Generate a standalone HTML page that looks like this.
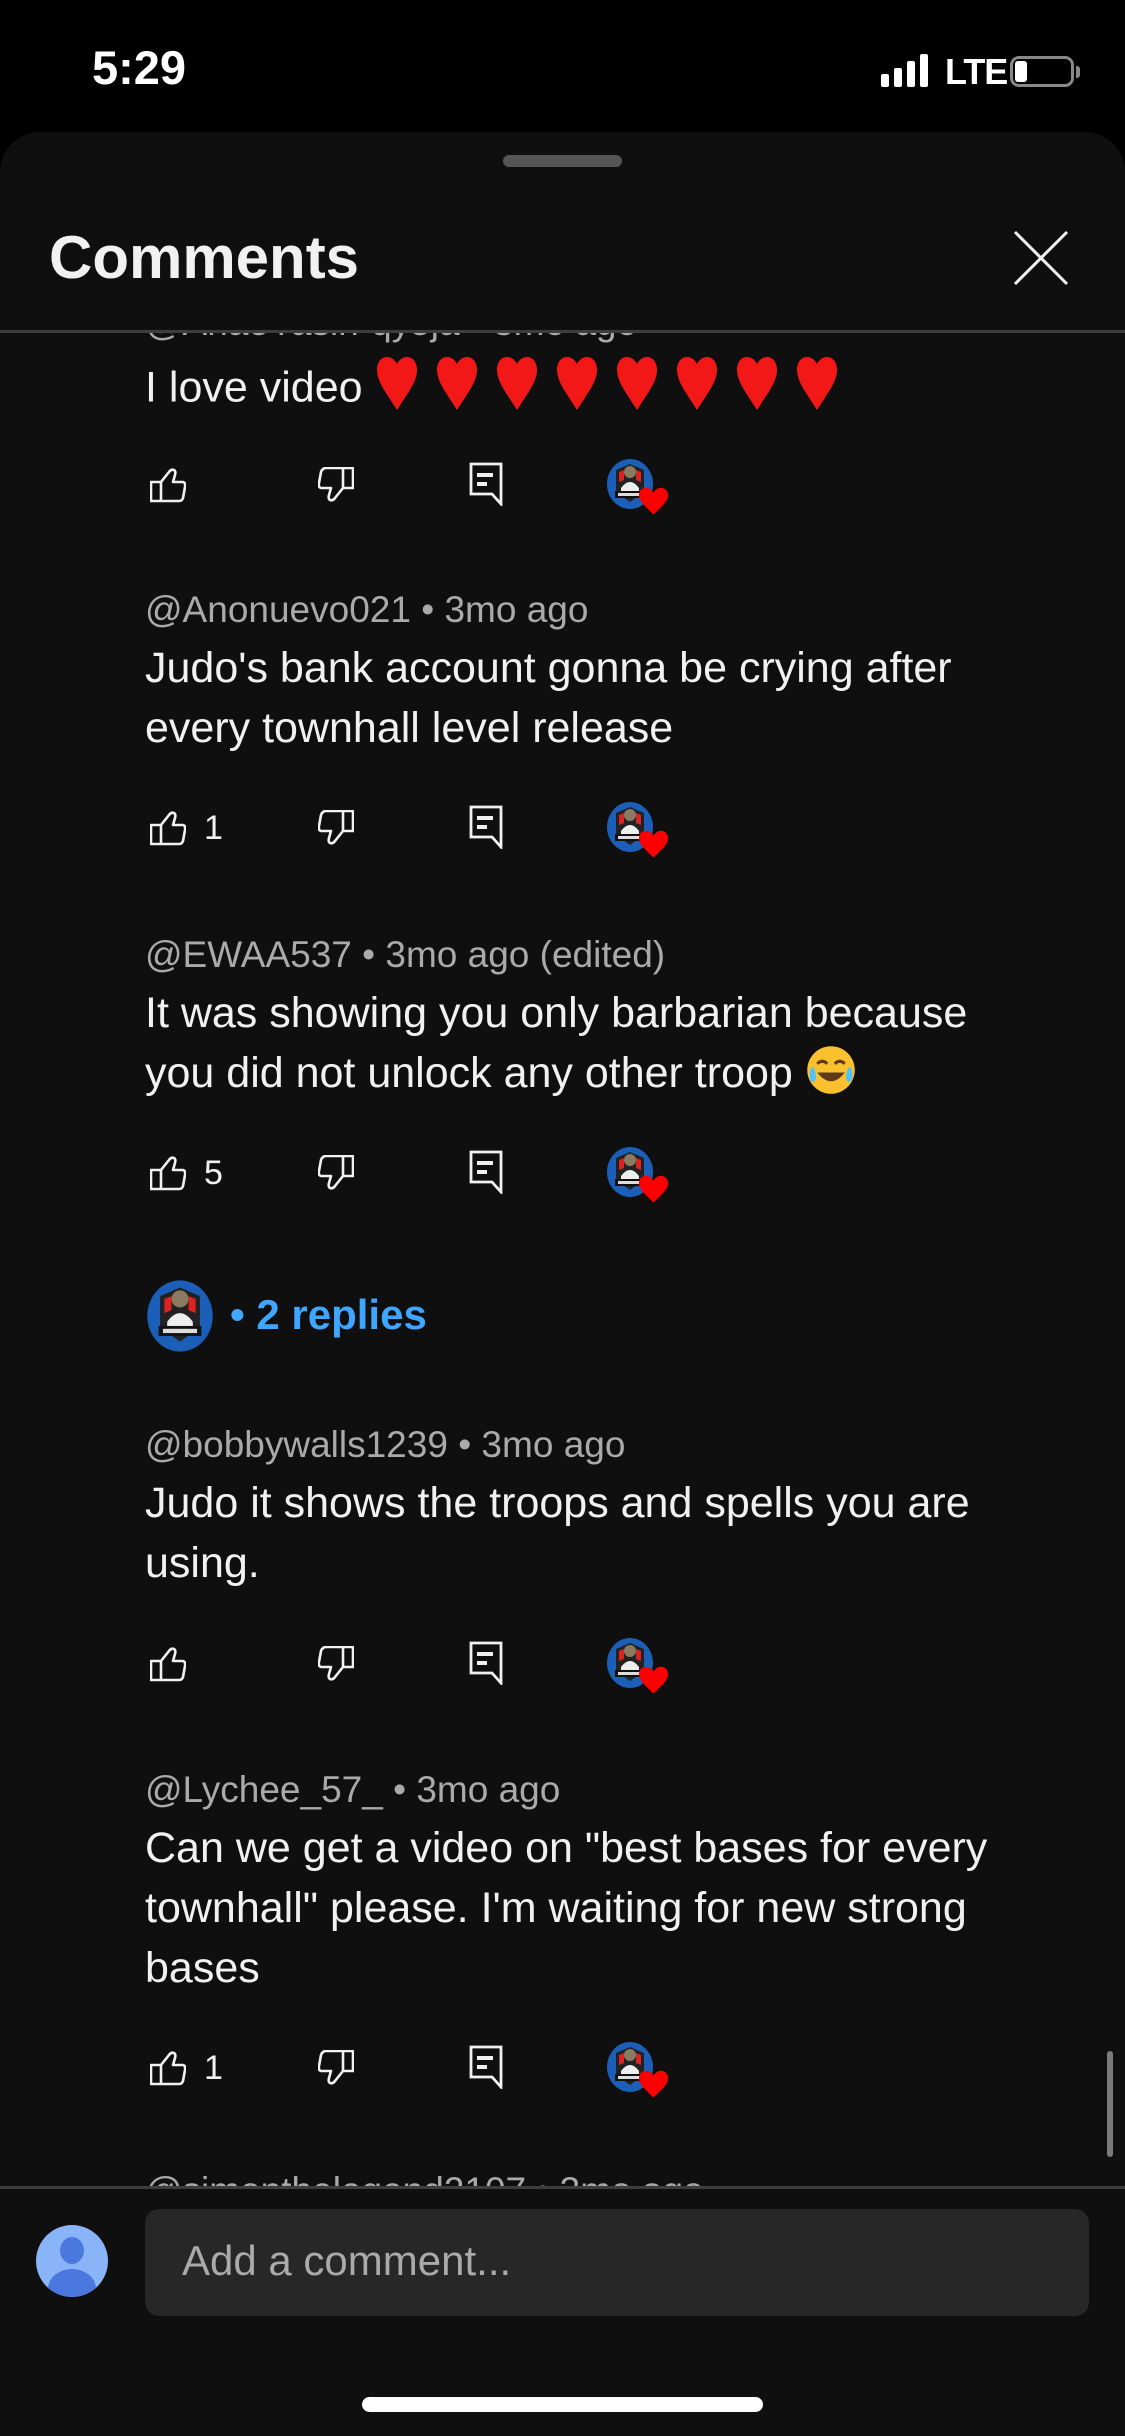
<!DOCTYPE html>
<html><head><meta charset="utf-8"><style>
*{margin:0;padding:0;box-sizing:border-box}
body{width:1125px;height:2436px;background:#000;position:relative;overflow:hidden;font-family:"Liberation Sans",sans-serif;color:#f1f1f1}
.abs{position:absolute}
.sheet{left:0;top:132px;width:1125px;height:2304px;background:#0f0f0f;border-radius:40px 40px 0 0}
.meta{position:absolute;left:145px;font-size:37px;color:#aaa;white-space:nowrap;line-height:42px}
.body{position:absolute;left:145px;font-size:43px;line-height:60px;color:#f1f1f1;white-space:nowrap}
.act{position:absolute;left:0;width:700px;height:60px}
.cnt{position:absolute;font-size:34px;color:#f1f1f1;top:12px}
</style></head><body>
<svg width="0" height="0" style="position:absolute">
<defs>
<symbol id="like" viewBox="0 0 36 36"><path d="M1 15h10v19H1z M11 15 L19 5 Q21 2 24 3 Q26 4 25 8 L23 15 H33 Q36 16 35 20 L33 31 Q32 34 29 34 H11" fill="none" stroke="#f1f1f1" stroke-width="2.6" stroke-linejoin="round"/></symbol>
<symbol id="dis" viewBox="0 0 36 36"><path d="M25 1h10v20H25z M25 21 L17 31 Q15 34 12 33 Q10 32 11 28 L13 21 H3 Q0 20 1 16 L3 5 Q4 2 7 1 H25" fill="none" stroke="#f1f1f1" stroke-width="2.6" stroke-linejoin="round"/></symbol>
<symbol id="rep" viewBox="0 0 34 44"><path d="M2 2H32V42L23 32H2Z" fill="none" stroke="#f1f1f1" stroke-width="2.8"/><rect x="8" y="11" width="16" height="4" fill="#f1f1f1"/><rect x="8" y="20" width="10" height="4" fill="#f1f1f1"/></symbol>
<symbol id="heart" viewBox="0 0 20 20"><path d="M10 19 C4 13 0 10 0 5.5 C0 2.5 2.2 0.5 5 0.5 C7.2 0.5 9 2 10 4 C11 2 12.8 0.5 15 0.5 C17.8 0.5 20 2.5 20 5.5 C20 10 16 13 10 19Z" fill="#ff0000"/></symbol>
<symbol id="heart2" viewBox="0 0 20 28"><path d="M10 27 C5 19 0 13 0 7 C0 3 2.2 0.5 5 0.5 C7.2 0.5 9 2 10 4 C11 2 12.8 0.5 15 0.5 C17.8 0.5 20 3 20 7 C20 13 15 19 10 27Z" fill="#f21818"/></symbol>
<symbol id="ava" viewBox="0 0 48 52"><ellipse cx="24" cy="26" rx="23" ry="25" fill="#1c5fb8"/><path d="M10 12 L24 6 L38 12 L38 34 L24 44 L10 34Z" fill="#222"/><path d="M13 14 L18 12 L18 22 L13 24Z M35 14 L30 12 L30 22 L35 24Z" fill="#d22"/><circle cx="24" cy="14" r="6" fill="#8a7a60"/><path d="M15 30 Q24 18 33 30 L33 34 L15 34Z" fill="#eee"/><rect x="9" y="33" width="30" height="7" fill="#111"/><rect x="12" y="35" width="24" height="3" fill="#ddd"/></symbol>
<symbol id="emo" viewBox="0 0 40 40"><circle cx="20" cy="20" r="19" fill="#fbc02d"/><path d="M9 15 Q13 11 17 15 M23 15 Q27 11 31 15" stroke="#5d3a1a" stroke-width="2.5" fill="none"/><path d="M9 22 Q20 36 31 22Z" fill="#5d3a1a"/><path d="M4 18 Q1 28 6 30 Q10 26 6 18Z M36 18 Q39 28 34 30 Q30 26 34 18Z" fill="#4fc3f7"/></symbol>
</defs></svg>

<div class="abs" style="left:92px;top:40px;font-size:47px;font-weight:bold;color:#fff">5:29</div>
<div class="abs" style="left:881px;top:74px;width:8px;height:13px;background:#fff;border-radius:2px"></div>
<div class="abs" style="left:894px;top:68px;width:8px;height:19px;background:#fff;border-radius:2px"></div>
<div class="abs" style="left:907px;top:61px;width:8px;height:26px;background:#fff;border-radius:2px"></div>
<div class="abs" style="left:920px;top:54px;width:8px;height:33px;background:#fff;border-radius:2px"></div>
<div class="abs" style="left:945px;top:51px;font-size:36px;font-weight:bold;color:#fff;letter-spacing:-1px">LTE</div>
<div class="abs" style="left:1010px;top:56px;width:64px;height:31px;border:3px solid #888;border-radius:9px"></div>
<div class="abs" style="left:1015px;top:61px;width:12px;height:21px;background:#fff;border-radius:3px"></div>
<div class="abs" style="left:1076px;top:66px;width:4px;height:12px;background:#888;border-radius:0 3px 3px 0"></div>

<div class="abs sheet"></div>
<div class="abs" style="left:503px;top:155px;width:119px;height:12px;background:#555;border-radius:6px"></div>
<div class="abs" style="left:49px;top:223px;font-size:60px;font-weight:bold;color:#f1f1f1">Comments</div>
<svg class="abs" style="left:1012px;top:230px" width="58" height="56"><path d="M3 2L55 54M55 2L3 54" stroke="#f1f1f1" stroke-width="3"/></svg>

<div class="abs" style="left:0;top:333px;width:1125px;height:1855px;overflow:hidden">
<div style="position:relative;top:-333px;height:2200px">
<div class="meta" style="top:302px">@AnaeYasin-qy5ja • 3mo ago</div>
<div class="body" style="top:352px">I love video
<span style="display:inline-block;vertical-align:middle">
<svg width="480" height="60" viewBox="0 0 480 60"><use href="#heart2" x="0" y="4" width="46" height="56"/><use href="#heart2" x="60" y="4" width="46" height="56"/><use href="#heart2" x="120" y="4" width="46" height="56"/><use href="#heart2" x="180" y="4" width="46" height="56"/><use href="#heart2" x="240" y="4" width="46" height="56"/><use href="#heart2" x="300" y="4" width="46" height="56"/><use href="#heart2" x="360" y="4" width="46" height="56"/><use href="#heart2" x="420" y="4" width="46" height="56"/></svg></span></div>

<div class="meta" style="top:589px">@Anonuevo021 • 3mo ago</div>
<div class="body" style="top:638px">Judo's bank account gonna be crying after<br>every townhall level release</div>

<div class="meta" style="top:934px">@EWAA537 • 3mo ago (edited)</div>
<div class="body" style="top:983px">It was showing you only barbarian because<br>you did not unlock any other troop <svg width="52" height="50" viewBox="0 0 40 40" style="vertical-align:-8px"><use href="#emo"/></svg></div>

<svg class="abs" style="left:144px;top:1279px" width="72" height="74" viewBox="0 0 48 52"><use href="#ava"/></svg>
<div class="abs" style="left:230px;top:1291px;font-size:42px;color:#3ea6ff;font-weight:bold">• 2 replies</div>

<div class="meta" style="top:1424px">@bobbywalls1239 • 3mo ago</div>
<div class="body" style="top:1473px">Judo it shows the troops and spells you are<br>using.</div>

<div class="meta" style="top:1769px">@Lychee_57_ • 3mo ago</div>
<div class="body" style="top:1818px">Can we get a video on "best bases for every<br>townhall" please. I'm waiting for new strong<br>bases</div>

<div class="meta" style="top:2170px">@simonthelegend2107 • 3mo ago</div>
</div></div>

<div class="act" style="top:454px">
<svg class="abs" style="left:150px;top:13px" width="36" height="36"><use href="#like"/></svg>
<svg class="abs" style="left:318px;top:13px" width="36" height="36"><use href="#dis"/></svg>
<svg class="abs" style="left:469px;top:8px" width="34" height="44"><use href="#rep"/></svg>
<svg class="abs" style="left:606px;top:4px" width="48" height="52"><use href="#ava"/></svg>
<svg class="abs" style="left:639px;top:33px" width="29" height="29"><use href="#heart"/></svg>
</div>
<div class="act" style="top:797px">
<svg class="abs" style="left:150px;top:13px" width="36" height="36"><use href="#like"/></svg><div class="cnt" style="left:204px">1</div>
<svg class="abs" style="left:318px;top:13px" width="36" height="36"><use href="#dis"/></svg>
<svg class="abs" style="left:469px;top:8px" width="34" height="44"><use href="#rep"/></svg>
<svg class="abs" style="left:606px;top:4px" width="48" height="52"><use href="#ava"/></svg>
<svg class="abs" style="left:639px;top:33px" width="29" height="29"><use href="#heart"/></svg>
</div>
<div class="act" style="top:1142px">
<svg class="abs" style="left:150px;top:13px" width="36" height="36"><use href="#like"/></svg><div class="cnt" style="left:204px">5</div>
<svg class="abs" style="left:318px;top:13px" width="36" height="36"><use href="#dis"/></svg>
<svg class="abs" style="left:469px;top:8px" width="34" height="44"><use href="#rep"/></svg>
<svg class="abs" style="left:606px;top:4px" width="48" height="52"><use href="#ava"/></svg>
<svg class="abs" style="left:639px;top:33px" width="29" height="29"><use href="#heart"/></svg>
</div>
<div class="act" style="top:1633px">
<svg class="abs" style="left:150px;top:13px" width="36" height="36"><use href="#like"/></svg>
<svg class="abs" style="left:318px;top:13px" width="36" height="36"><use href="#dis"/></svg>
<svg class="abs" style="left:469px;top:8px" width="34" height="44"><use href="#rep"/></svg>
<svg class="abs" style="left:606px;top:4px" width="48" height="52"><use href="#ava"/></svg>
<svg class="abs" style="left:639px;top:33px" width="29" height="29"><use href="#heart"/></svg>
</div>
<div class="act" style="top:2037px">
<svg class="abs" style="left:150px;top:13px" width="36" height="36"><use href="#like"/></svg><div class="cnt" style="left:204px">1</div>
<svg class="abs" style="left:318px;top:13px" width="36" height="36"><use href="#dis"/></svg>
<svg class="abs" style="left:469px;top:8px" width="34" height="44"><use href="#rep"/></svg>
<svg class="abs" style="left:606px;top:4px" width="48" height="52"><use href="#ava"/></svg>
<svg class="abs" style="left:639px;top:33px" width="29" height="29"><use href="#heart"/></svg>
</div>

<div class="abs" style="left:0;top:330px;width:1125px;height:3px;background:#3d3d3d"></div>
<div class="abs" style="left:1107px;top:2051px;width:6px;height:106px;background:#7a7a7a;border-radius:3px"></div>
<div class="abs" style="left:0;top:2186px;width:1125px;height:3px;background:#3d3d3d"></div>

<div class="abs" style="left:36px;top:2225px;width:72px;height:72px;border-radius:50%;background:#8ab4f8;overflow:hidden">
<div class="abs" style="left:24px;top:12px;width:24px;height:27px;border-radius:50%;background:#4a78de"></div>
<div class="abs" style="left:12px;top:44px;width:48px;height:40px;border-radius:50%;background:#4a78de"></div>
</div>
<div class="abs" style="left:145px;top:2209px;width:944px;height:107px;background:#272727;border-radius:14px"></div>
<div class="abs" style="left:182px;top:2237px;font-size:42px;color:#aaa">Add a comment...</div>
<div class="abs" style="left:362px;top:2397px;width:401px;height:15px;background:#fff;border-radius:8px"></div>
</body></html>
